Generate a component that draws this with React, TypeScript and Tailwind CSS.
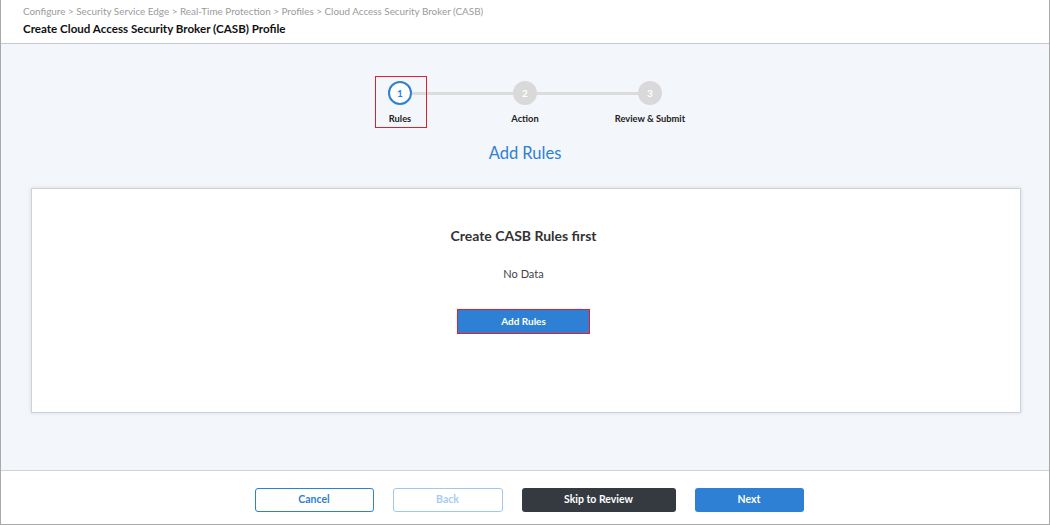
import React from "react";

const steps = [
  { n: 1, label: "Rules" },
  { n: 2, label: "Action" },
  { n: 3, label: "Review & Submit" },
];

function Stepper() {
  return (
    <div className="mx-auto flex w-[375px]">
      {steps.map((s, i) => {
        const active = i === 0;
        return (
          <div key={s.n} className="relative flex w-[125px] flex-col items-center">
            <div className="flex w-full items-center">
              <div className={`h-[3px] flex-1 ${i === 0 ? "bg-transparent" : "bg-[#dcdcdc]"}`} />
              {active ? (
                <div className="flex h-6 w-6 items-center justify-center rounded-full border-2 border-[#2d80d3] bg-white text-[10px] font-bold text-[#2d80d3]">
                  {s.n}
                </div>
              ) : (
                <div className="flex h-6 w-6 items-center justify-center rounded-full bg-[#d9d9d9] text-[10px] font-bold text-white">
                  {s.n}
                </div>
              )}
              <div className={`h-[3px] flex-1 ${i === steps.length - 1 ? "bg-transparent" : "bg-[#dcdcdc]"}`} />
            </div>
            <div className="mt-[7px] whitespace-nowrap text-[9.3px] font-bold leading-[14px] text-[#222]">
              {s.label}
            </div>
            {active && (
              <div className="absolute left-[37px] top-[-5px] h-[52px] w-[52px] border border-[#e0202c]" />
            )}
          </div>
        );
      })}
    </div>
  );
}

export default function App() {
  return (
    <div
      className="flex h-[525px] w-[1050px] flex-col border-x border-b border-[#a9a9a9] bg-white"
      style={{ fontFamily: "Lato, 'Noto Sans', sans-serif" }}
    >
      <header className="h-[44px] shrink-0 border-b border-[#c8c8c8] bg-white px-[22px] pt-[4px]">
        <div className="text-[9.9px] leading-[14px] text-[#9b9b9b]">
          Configure &gt; Security Service Edge &gt; Real-Time Protection &gt; Profiles &gt; Cloud Access
          Security Broker (CASB)
        </div>
        <div className="mt-[2px] text-[11.6px] font-bold leading-[18px] text-[#111]">
          Create Cloud Access Security Broker (CASB) Profile
        </div>
      </header>

      <main className="h-[426px] shrink-0 bg-[#f3f6fa] pt-[37px]">
        <Stepper />
        <h2 className="mt-[15px] text-center text-[16.5px] leading-[24px] text-[#2d80d3]">Add Rules</h2>
        <section className="ml-[30px] mr-[28px] mt-[23px] flex h-[225px] flex-col items-center border border-[#cfd3d8] bg-white pr-[5px] pt-[37px] shadow-[0_0_4px_rgba(0,0,0,0.12)]">
          <div className="text-[14px] font-bold leading-[20px] text-[#333]">Create CASB Rules first</div>
          <div className="mt-[20px] text-[11px] leading-[16px] text-[#444]">No Data</div>
          <div className="mt-[27px] border border-[#e41e2b]">
            <button
              type="button"
              className="block h-[23px] w-[131px] bg-[#2d80d3] text-[10px] font-bold text-white"
            >
              Add Rules
            </button>
          </div>
        </section>
      </main>

      <footer className="flex h-[54px] shrink-0 items-start justify-center gap-[19px] border-t border-[#cfd3d8] bg-white pl-[8px] pt-[17px]">
        <button
          type="button"
          className="h-[24px] w-[119px] rounded-[3px] border border-[#2d80d3] bg-white text-[10.5px] font-bold text-[#2d80d3]"
        >
          Cancel
        </button>
        <button
          type="button"
          className="h-[24px] w-[110px] rounded-[3px] border border-[#9fcaf0] bg-white text-[10.5px] font-bold text-[#a6cdef]"
        >
          Back
        </button>
        <button
          type="button"
          className="h-[24px] w-[154px] rounded-[3px] bg-[#343a40] text-[10.5px] font-bold text-white"
        >
          Skip to Review
        </button>
        <button
          type="button"
          className="h-[24px] w-[109px] rounded-[3px] bg-[#2d80d3] text-[10.5px] font-bold text-white"
        >
          Next
        </button>
      </footer>
    </div>
  );
}
